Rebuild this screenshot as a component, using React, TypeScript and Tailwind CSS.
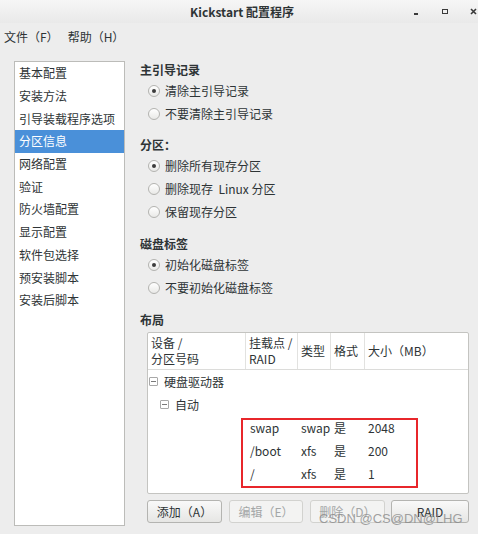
import React from 'react';

const cjk = { fontFamily: '"Noto Sans CJK SC", "Noto Sans", sans-serif' };

const navItems = [
  '基本配置',
  '安装方法',
  '引导装载程序选项',
  '分区信息',
  '网络配置',
  '验证',
  '防火墙配置',
  '显示配置',
  '软件包选择',
  '预安装脚本',
  '安装后脚本',
];

function Radio({ checked, label }: { checked?: boolean; label: string }) {
  return (
    <div className="h-[23px] flex items-center pl-[8px] gap-[5px]">
      <span className="w-[12px] h-[12px] rounded-full border border-[#b3b3b0] bg-gradient-to-b from-[#ffffff] to-[#e9e9e7] flex items-center justify-center">
        {checked && <span className="w-[4px] h-[4px] rounded-full bg-[#3c3c3c]" />}
      </span>
      <span className="text-[12px] text-[#2e3436] whitespace-pre">{label}</span>
    </div>
  );
}

function Heading({ children }: { children: React.ReactNode }) {
  return <div className="h-[18px] flex items-center text-[12px] font-bold text-[#2e3436]">{children}</div>;
}

function Expander({ label, indent }: { label: string; indent: string }) {
  return (
    <div className={`h-[23px] flex items-center ${indent}`}>
      <span className="w-[9px] h-[9px] border border-[#a8a8a8] rounded-[1px] flex items-center justify-center bg-white">
        <span className="w-[5px] h-px bg-[#7a7a7a]" />
      </span>
      <span className="ml-[6px] text-[12px] text-[#2e3436]">{label}</span>
    </div>
  );
}

const rows = [
  ['swap', 'swap', '是', '2048'],
  ['/boot', 'xfs', '是', '200'],
  ['/', 'xfs', '是', '1'],
];

export default function App() {
  return (
    <div className="w-[478px] h-[534px] bg-[#ededed] relative overflow-hidden text-[#2e3436]" style={cjk}>
      {/* title bar */}
      <div className="h-[23px] relative flex items-center justify-center bg-gradient-to-b from-[#f6f6f6] to-[#e9e9e9]">
        <span className="text-[12px] font-bold text-[#2e3436] pl-[6px]">Kickstart 配置程序</span>
        <div className="absolute right-0 top-0 h-[23px] flex items-center">
          <span className="w-[4px] h-[2px] bg-[#3a3a3a] mt-[4px] mr-[24px]" />
          <span className="w-[6px] h-[5px] border-[1.5px] border-[#3a3a3a] mr-[22px]" />
          <svg width="7" height="7" viewBox="0 0 7 7" className="mr-[1px]">
            <path d="M1 1L6 6M6 1L1 6" stroke="#3a3a3a" strokeWidth="1.6" />
          </svg>
        </div>
      </div>

      {/* menu bar */}
      <div className="h-[27px] flex items-center text-[12px] pl-[4px] gap-[9px]">
        <span>文件（F）</span>
        <span>帮助（H）</span>
      </div>

      <div className="flex pt-[11px]">
        {/* sidebar */}
        <div className="ml-[14px] w-[111px] h-[465px] bg-white border border-[#bcbcb9]">
          {navItems.map((item, i) => (
            <div
              key={item}
              className={`h-[22.7px] flex items-center pl-[4px] text-[12px] ${
                i === 3 ? 'bg-[#4a90d9] text-white' : 'text-[#2e3436]'
              }`}
            >
              {item}
            </div>
          ))}
        </div>

        {/* content */}
        <div className="ml-[15px] flex flex-col">
          <Heading>主引导记录</Heading>
          <Radio checked label="清除主引导记录" />
          <Radio label="不要清除主引导记录" />

          <div className="h-[11px]" />
          <Heading>分区：</Heading>
          <Radio checked label="删除所有现存分区" />
          <Radio label="删除现存  Linux 分区" />
          <Radio label="保留现存分区" />

          <div className="h-[12px]" />
          <Heading>磁盘标签</Heading>
          <Radio checked label="初始化磁盘标签" />
          <Radio label="不要初始化磁盘标签" />

          <div className="h-[12px]" />
          <Heading>布局</Heading>

          {/* partition table */}
          <div className="ml-[7px] mt-[3px] w-[322px] h-[162px] bg-white border border-[#c4c4c1] rounded-[2px] relative">
            <div className="h-[37px] flex border-b border-[#dcdcda] text-[12px] leading-[16px]">
              <div className="w-[98px] pl-[3px] flex flex-col justify-center border-r border-[#e2e2e0]">
                <span>设备 /</span>
                <span>分区号码</span>
              </div>
              <div className="w-[52px] pl-[3px] flex flex-col justify-center border-r border-[#e2e2e0]">
                <span>挂载点 /</span>
                <span>RAID</span>
              </div>
              <div className="w-[33px] pl-[3px] flex items-center border-r border-[#e2e2e0]">类型</div>
              <div className="w-[34px] pl-[3px] flex items-center border-r border-[#e2e2e0]">格式</div>
              <div className="flex-1 pl-[3px] flex items-center">大小（MB）</div>
            </div>

            <Expander label="硬盘驱动器" indent="pl-[1px]" />
            <Expander label="自动" indent="pl-[12px]" />

            {rows.map((r) => (
              <div key={r[0]} className="h-[23px] flex items-center text-[12px]">
                <div className="w-[98px]" />
                <div className="w-[52px] pl-[4px]">{r[0]}</div>
                <div className="w-[33px] pl-[3px]">{r[1]}</div>
                <div className="w-[34px] pl-[3px]">{r[2]}</div>
                <div className="flex-1 pl-[3px]">{r[3]}</div>
              </div>
            ))}

            {/* red annotation box */}
            <div className="absolute left-[93px] top-[85px] w-[177px] h-[70px] border-2 border-[#e8262b] pointer-events-none" />
          </div>

          {/* buttons */}
          <div className="ml-[7px] mt-[6px] flex text-[12px]">
            <button className="w-[75px] h-[23px] rounded-[3px] border border-[#b4b4b1] bg-gradient-to-b from-[#f9f9f9] to-[#e6e6e4] text-[#2e3436]">
              添加（A）
            </button>
            <button className="ml-[7px] w-[74px] h-[23px] rounded-[3px] border border-[#d2d2cf] bg-[#f3f3f2] text-[#a4a7a7]">
              编辑（E）
            </button>
            <button className="ml-[7px] w-[75px] h-[23px] rounded-[3px] border border-[#d2d2cf] bg-[#f3f3f2] text-[#a4a7a7]">
              删除（D）
            </button>
            <button className="ml-[6px] w-[78px] h-[23px] rounded-[3px] border border-[#b4b4b1] bg-gradient-to-b from-[#f9f9f9] to-[#e6e6e4] text-[#2e3436]">
              RAID
            </button>
          </div>
        </div>
      </div>

      {/* watermark */}
      <div
        className="absolute left-[319px] top-[509px] text-[13px] text-[#8a8a8a]/80 pointer-events-none"
        style={{ fontFamily: '"Liberation Sans", Arial, sans-serif' }}
      >
        CSDN @CS@DN@LHG
      </div>
    </div>
  );
}
